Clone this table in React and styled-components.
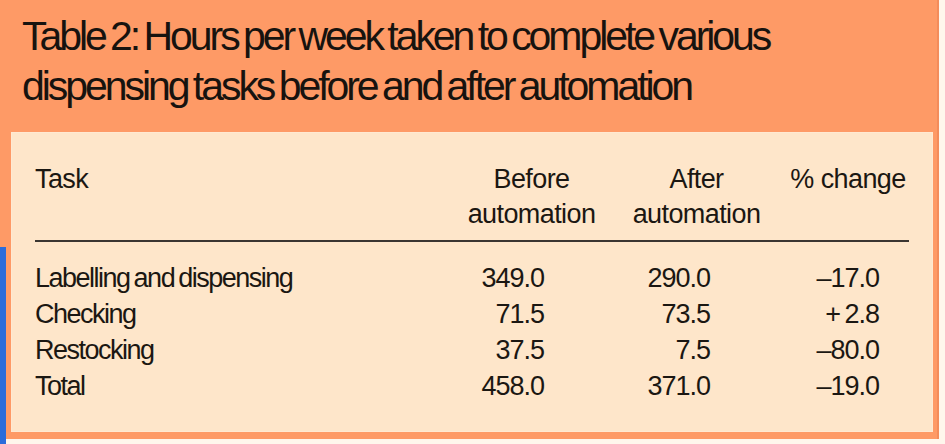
import React from 'react';
import styled, { createGlobalStyle } from 'styled-components';

const GlobalStyle = createGlobalStyle`
  html, body {
    margin: 0;
    padding: 0;
    background: #fff6ec;
  }
  body {
    font-family: "Liberation Sans", Arial, sans-serif;
    color: #1b1712;
  }
`;

const Page = styled.div`
  position: relative;
  width: 945px;
  height: 444px;
  overflow: hidden;
`;

const Frame = styled.div`
  width: 939px;
  height: 439px;
  box-sizing: border-box;
  background: #fe9a66;
  border-right: 2px solid #f48c5a;
  padding: 0 4px 7px 11px;
  display: flex;
  flex-direction: column;
`;

const Title = styled.h1`
  margin: 0;
  height: 132px;
  box-sizing: border-box;
  padding: 11px 0 0 11px;
  font-size: 41px;
  line-height: 50px;
  font-weight: normal;
  letter-spacing: -3.05px;
  word-spacing: -3px;
  color: #17130f;
`;

const Panel = styled.div`
  flex: 1;
  background: #fee6ca;
  box-shadow: inset 0 0 0 1px #ffe9d2;
  padding: 30px 24px 0 24px;
`;

const Grid = styled.div`
  display: grid;
  grid-template-columns: 1fr 165px 165px 130px;
  font-size: 27px;
  line-height: 36px;
`;

const Head = styled.div`
  line-height: 35px;
  letter-spacing: -0.6px;
  text-align: ${p => (p.$left ? 'left' : 'center')};
  padding-left: ${p => p.$shift || 0}px;
`;

const Rule = styled.div`
  grid-column: 1 / -1;
  height: 2px;
  background: #3b3631;
  margin: 8px 0 18px;
`;

const Cell = styled.div`
  text-align: ${p => (p.$num ? 'right' : 'left')};
  padding-right: ${p => p.$pad || 0}px;
  letter-spacing: ${p => (p.$num ? -1 : -1.5)}px;
  word-spacing: -2px;
  font-variant-numeric: tabular-nums;
`;

const BlueEdge = styled.div`
  position: absolute;
  left: 0;
  top: 247px;
  width: 6px;
  bottom: 0;
  background: #2b6cdb;
`;

const rows = [
  ['Labelling and dispensing', '349.0', '290.0', '\u201317.0'],
  ['Checking', '71.5', '73.5', '+ 2.8'],
  ['Restocking', '37.5', '7.5', '\u201380.0'],
  ['Total', '458.0', '371.0', '\u201319.0'],
];

const pads = [70, 69, 30];

export default function App() {
  return (
    <Page>
      <GlobalStyle />
      <Frame>
        <Title>
          Table 2: Hours per week taken to complete various
          <br />
          dispensing tasks before and after automation
        </Title>
        <Panel>
          <Grid>
            <Head $left>Task</Head>
            <Head>Before<br />automation</Head>
            <Head>After<br />automation</Head>
            <Head $shift={8}>% change</Head>
            <Rule />
            {rows.map(r => (
              <React.Fragment key={r[0]}>
                <Cell>{r[0]}</Cell>
                {r.slice(1).map((v, i) => (
                  <Cell key={i} $num $pad={pads[i]}>{v}</Cell>
                ))}
              </React.Fragment>
            ))}
          </Grid>
        </Panel>
      </Frame>
      <BlueEdge />
    </Page>
  );
}
